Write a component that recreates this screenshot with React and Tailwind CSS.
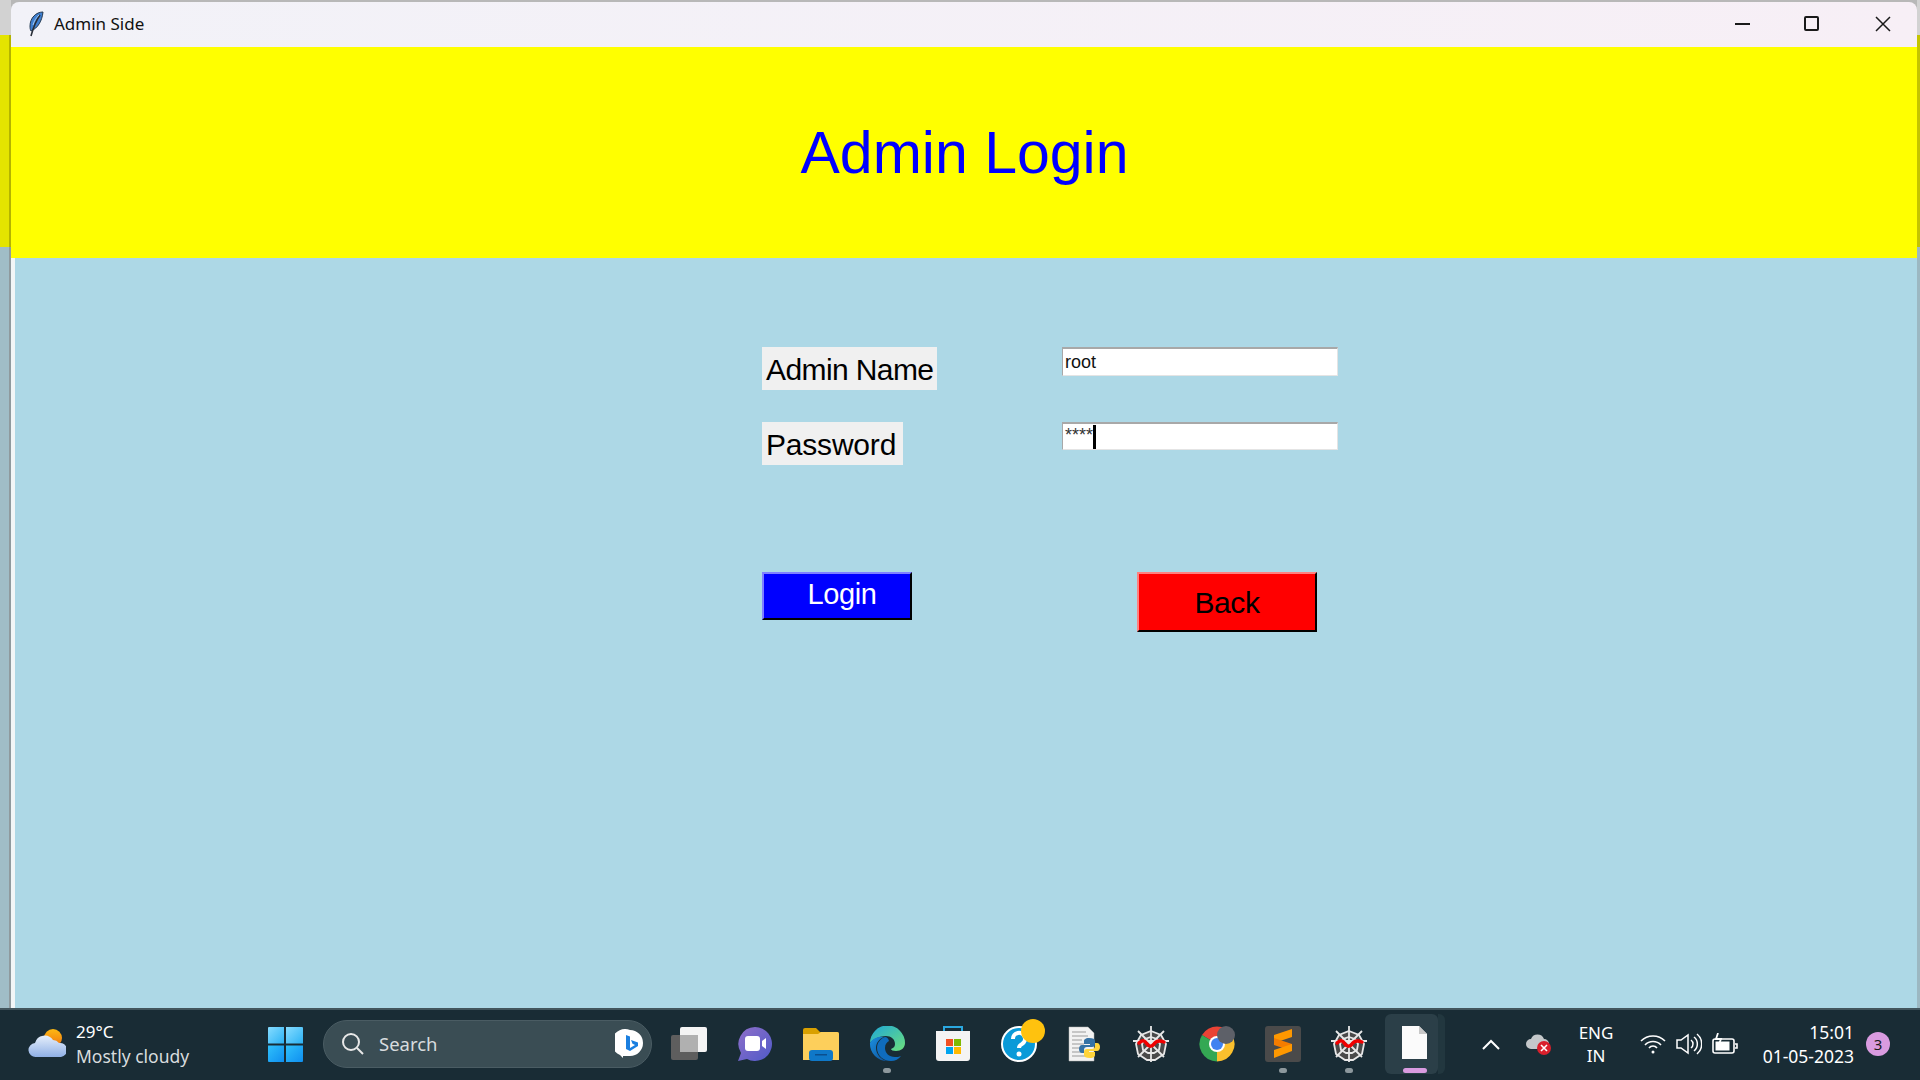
import React from 'react';

const Feather = () => (
  <svg width="16" height="26" viewBox="0 0 16 26">
    <path d="M15 1C8 1 2 7 2 15c0 2 0 3 1 5 7-3 11-10 12-19z" fill="#3f7fd0" stroke="#24384f" strokeWidth="1" />
    <path d="M12 4C9 8 6 14 3 25" stroke="#2a2f38" strokeWidth="1.6" fill="none" />
    <path d="M11 4C8 7 6 10 5 14" stroke="#9cc6f2" strokeWidth="1" fill="none" />
  </svg>
);

const Weather = () => (
  <svg width="38" height="34" viewBox="0 0 38 34">
    <defs>
      <linearGradient id="sun" x1="0" y1="0" x2="0" y2="1"><stop offset="0" stopColor="#fdb913" /><stop offset="1" stopColor="#f0720f" /></linearGradient>
      <linearGradient id="cl" x1="0" y1="0" x2="0" y2="1"><stop offset="0" stopColor="#e6effb" /><stop offset="1" stopColor="#8fb0e6" /></linearGradient>
    </defs>
    <circle cx="25" cy="11" r="9" fill="url(#sun)" />
    <path d="M8 30a7 7 0 0 1-1-14 10 10 0 0 1 18-3 8 8 0 0 1 6 3 7 7 0 0 1 2 14z" fill="url(#cl)" />
  </svg>
);

const WinLogo = () => (
  <svg width="35" height="35" viewBox="0 0 35 35">
    <defs>
      <linearGradient id="w1" x1="0" y1="0" x2="1" y2="1"><stop offset="0" stopColor="#86dcff" /><stop offset="1" stopColor="#2cb2f5" /></linearGradient>
      <linearGradient id="w2" x1="0" y1="0" x2="1" y2="1"><stop offset="0" stopColor="#2fc0fb" /><stop offset="1" stopColor="#0f8ff0" /></linearGradient>
    </defs>
    <path d="M1 0h15v16.500H0V1a1 1 0 0 1 1-1z" fill="url(#w1)" />
    <path d="M18 0h16a1 1 0 0 1 1 1v15.500H18z" fill="url(#w1)" />
    <path d="M0 18.500h16V35H1a1 1 0 0 1-1-1z" fill="url(#w2)" />
    <path d="M18 18.500h17V34a1 1 0 0 1-1 1H18z" fill="url(#w2)" />
  </svg>
);

const Bing = () => (
  <svg width="30" height="30" viewBox="0 0 30 30">
    <path d="M15 1a13 13 0 0 1 0 26H8v2l-3-3A13 13 0 0 1 15 1z" fill="#fff" />
    <path d="M11 6l4 1.500v11.500l5-3-2.500-1.200-1.500-3.800 7 2.500v3.500l-8 5-4-2z" fill="#1a7fe0" />
  </svg>
);

const TaskView = () => (
  <svg width="38" height="36" viewBox="0 0 38 36">
    <rect x="1" y="9" width="27" height="25" rx="2" fill="#5e5e5e" />
    <rect x="10" y="1" width="27" height="25" rx="2" fill="#f4f4f4" />
    <rect x="10" y="9" width="18" height="17" fill="#b0b0b0" />
  </svg>
);

const Meet = () => (
  <svg width="36" height="36" viewBox="0 0 36 36">
    <defs><linearGradient id="m" x1="0" y1="0" x2="1" y2="1"><stop offset="0" stopColor="#8f6fc9" /><stop offset="1" stopColor="#4f5ac9" /></linearGradient></defs>
    <path d="M18 1a17 17 0 1 1-8 32l-9 2 3-8A17 17 0 0 1 18 1z" fill="url(#m)" />
    <rect x="8" y="10" width="15" height="15" rx="3" fill="#fff" />
    <path d="M25 15l4-3v11l-4-3z" fill="#fff" />
  </svg>
);

const Folder = () => (
  <svg width="36" height="33" viewBox="0 0 36 33">
    <path d="M0 2a2 2 0 0 1 2-2h11l4 4h17a2 2 0 0 1 2 2v4H0z" fill="#d9a000" />
    <path d="M0 6h15l3-2h16a2 2 0 0 1 2 2v26H0z" fill="#fdcf5b" />
    <rect x="6" y="22" width="24" height="11" rx="3" fill="#0f78c8" />
    <rect x="12" y="26" width="12" height="1.500" fill="#0b4f8e" />
  </svg>
);

const Edge = () => (
  <svg width="36" height="36" viewBox="0 0 36 36">
    <defs>
      <linearGradient id="e1" x1="0" y1="0" x2="1" y2="1"><stop offset="0" stopColor="#1ea7d8" /><stop offset="1" stopColor="#6de07c" /></linearGradient>
      <linearGradient id="e2" x1="0" y1="0" x2="1" y2="1"><stop offset="0" stopColor="#1b8fe0" /><stop offset="1" stopColor="#0c4f97" /></linearGradient>
    </defs>
    <path d="M1 17A17.500 17.500 0 0 1 36 17c0 5-4 8-9 8-3 0-5-1-5-2 3-1 4-3 4-5 0-5-4-8-9-8-8 0-14 4-16 7z" fill="url(#e1)" />
    <path d="M1 17c2-4 8-7 14-6-5 2-8 6-8 11 0 6 5 12 12 13a17 17 0 0 1-18-18z" fill="url(#e2)" />
    <path d="M16 11c-5 2-8 6-8 11 0 7 6 13 14 13 4 0 8-2 10-5-2 1-4 1-6 1-6 0-10-4-10-9 0-4 2-6 4-7-1-3-2-4-4-4z" fill="#0f6cbd" />
  </svg>
);

const Store = () => (
  <svg width="36" height="36" viewBox="0 0 36 36">
    <path d="M9 6V1h18v5" fill="none" stroke="#2aa8e0" strokeWidth="2" />
    <path d="M1 5h34v27a3 3 0 0 1-3 3H4a3 3 0 0 1-3-3z" fill="#f4f4f4" />
    <rect x="11" y="13" width="7" height="7" fill="#f25022" />
    <rect x="19" y="13" width="7" height="7" fill="#7fba00" />
    <rect x="11" y="21" width="7" height="7" fill="#00a4ef" />
    <rect x="19" y="21" width="7" height="7" fill="#ffb900" />
  </svg>
);

const Help = () => (
  <div className="relative w-[36px] h-[36px]">
    <svg width="36" height="36" viewBox="0 0 36 36">
      <circle cx="18" cy="18" r="17" fill="#0a9ad8" stroke="#fff" strokeWidth="2" />
      <path d="M12 13a6 6 0 1 1 9 5c-2 1-3 2-3 4" fill="none" stroke="#fff" strokeWidth="4" />
      <circle cx="18" cy="28" r="2.500" fill="#fff" />
    </svg>
    <div className="absolute left-[20px] top-[-7px] w-[24px] h-[24px] rounded-full bg-[#ffc20e]" />
  </div>
);

const PyDoc = () => (
  <svg width="34" height="36" viewBox="0 0 34 36">
    <path d="M1 1h19l6 6v28H1z" fill="#f2f2f2" stroke="#b0b0b0" strokeWidth="0.500" />
    <path d="M4 6h14M4 10h16M4 14h10M4 18h12M4 22h8M4 26h10M4 30h14" stroke="#9a9a9a" strokeWidth="1" />
    <path d="M21 12c-4 0-5 2-5 3v3h6v1h-8c-2 0-3 2-3 4s1 4 3 4h2v-3c0-2 1-3 3-3h5c2 0 3-1 3-3v-3c0-2-2-3-6-3z" fill="#3572a5" />
    <path d="M22 32c4 0 5-2 5-3v-3h-6v-1h8c2 0 3-2 3-4s-1-4-3-4h-2v3c0 2-1 3-3 3h-5c-2 0-3 1-3 3v3c0 2 2 3 6 3z" fill="#ffd43b" />
  </svg>
);

const Spider = () => (
  <svg width="36" height="36" viewBox="0 0 36 36">
    <path d="M18 5l10 4 5 9-2 10-9 6H14l-9-6-2-10 5-9z" fill="#4a4a4a" />
    <g stroke="#e8e8e8" strokeWidth="1.800" fill="none">
      <path d="M18 0v36M5 5l26 26M31 5L5 31M0 15l36 0" />
      <path d="M18 5l10 4 5 9-2 10-9 6H14l-9-6-2-10 5-9z" />
      <path d="M18 11l6 2 3 5-1 6-5 3h-6l-5-3-1-6 3-5z" />
    </g>
    <path d="M6 17c4-4 6-2 8 1s5 3 7 0 5-4 10-2" fill="none" stroke="#f00000" strokeWidth="3.500" strokeLinecap="round" />
  </svg>
);

const Chrome = () => (
  <div className="relative w-[36px] h-[36px]">
    <svg width="36" height="36" viewBox="0 0 36 36">
      <path d="M18 18L3 9A17.500 17.500 0 0 1 33 9z" fill="#ea4335" />
      <path d="M18 18L33 9A17.500 17.500 0 0 1 18 35.500z" fill="#fbc02d" />
      <path d="M18 18L18 35.500A17.500 17.500 0 0 1 3 9z" fill="#34a853" />
      <circle cx="18" cy="18" r="8" fill="#fff" />
      <circle cx="18" cy="18" r="6" fill="#3f83f1" />
    </svg>
    <div className="absolute left-[18px] top-0 w-[18px] h-[18px] rounded-full bg-[#5d6068]" />
  </div>
);

const Sublime = () => (
  <div className="w-[36px] h-[36px] rounded-[3px] bg-[#4a4a4a] flex items-center justify-center">
    <svg width="18" height="30" viewBox="0 0 18 30">
      <path d="M18 0v8L0 14V6z" fill="#ff9800" />
      <path d="M0 9l18 6v7L0 16z" fill="#f57c00" />
      <path d="M18 15v7L0 29v-8z" fill="#ff9800" />
    </svg>
  </div>
);

const FileIcon = () => (
  <svg width="26" height="34" viewBox="0 0 26 34">
    <path d="M0 0h17l8 8v25H0z" fill="#fbfbfb" />
    <path d="M17 0v8h8z" fill="#c8c8c8" />
  </svg>
);

const Slot = ({ children, dot }) => (
  <div className="relative w-[66px] h-[70px] flex items-center justify-center shrink-0">
    {children}
    {dot && <div className="absolute left-[29px] bottom-[6px] w-[8px] h-[5px] rounded-full bg-[#8d989d]" />}
  </div>
);

export default function App() {
  return (
    <div className="w-[1920px] h-[1080px] flex flex-col overflow-hidden bg-[#b8b8b8]" style={{ fontFamily: '"Noto Sans", sans-serif' }}>
      <div className="flex flex-1 min-h-0">
        <div className="w-[11px] flex flex-col shrink-0">
          <div className="h-[35px] bg-[#d2d2d2]" />
          <div className="h-[212px] bg-[#e4e400] border-r-2 border-[#b4b400]" />
          <div className="flex-1 bg-[#a0bdc7] border-r-2 border-[#8f9a9e]" />
        </div>
        <div className="flex-1 flex flex-col mt-[2px] rounded-tl-[8px] rounded-tr-[8px] overflow-hidden">
          <div className="h-[45px] shrink-0 flex items-center pb-[2px] bg-gradient-to-r from-[#f2f2f8] to-[#f7eff6]">
            <div className="ml-[17px] w-[16px] flex"><Feather /></div>
            <div className="ml-[10px] text-[17px] text-[#111]">Admin Side</div>
            <div className="ml-auto flex items-center">
              <div className="w-[70px] flex justify-center"><div className="w-[15px] h-[2px] bg-[#1a1a1a]" /></div>
              <div className="w-[68px] mr-[4px] flex justify-center"><div className="w-[15px] h-[15px] rounded-[2px] border-2 border-[#1a1a1a]" /></div>
              <div className="w-[68px] flex justify-center">
                <svg width="16" height="16" viewBox="0 0 16 16"><path d="M1 1l14 14M15 1L1 15" stroke="#1a1a1a" strokeWidth="1.500" /></svg>
              </div>
            </div>
          </div>
          <div className="h-[211px] shrink-0 bg-[#ffff00] flex items-center justify-center pl-[1px] pt-[1px]">
            <div className="text-[59px] text-[#0000ff] leading-none" style={{ fontFamily: '"Liberation Sans", sans-serif' }}>Admin Login</div>
          </div>
          <div className="flex-1 bg-[#add8e6] border-l-[4px] border-[#f2f6f7] pl-[747px] pt-[89px]" style={{ fontFamily: '"Liberation Sans", sans-serif' }}>
            <div className="flex items-start h-[43px]">
              <div className="w-[300px] shrink-0">
                <div className="w-[175px] h-[43px] bg-[#f0f0f0] flex items-center pl-[4px] pt-[2px] text-[30px] tracking-[-0.6px] text-black">Admin Name</div>
              </div>
              <div className="w-[276px] h-[29px] bg-white border-t-2 border-l border-t-[#a8a8a8] border-l-[#a8a8a8] border-b border-r border-b-[#e4e4e4] border-r-[#e4e4e4] pl-[2px] flex items-center text-[18px] text-[#111]">root</div>
            </div>
            <div className="flex items-start h-[43px] mt-[32px]">
              <div className="w-[300px] shrink-0">
                <div className="w-[141px] h-[43px] bg-[#f0f0f0] flex items-center pl-[4px] pt-[2px] text-[30px] tracking-[-0.2px] text-black">Password</div>
              </div>
              <div className="w-[276px] h-[28px] bg-white border-t-2 border-l border-t-[#a8a8a8] border-l-[#a8a8a8] border-b border-r border-b-[#e4e4e4] border-r-[#e4e4e4] pl-[2px] flex items-center text-[18px] text-[#333]">
                <span className="-mt-[2px]">****</span>
                <span className="w-[3px] h-[24px] bg-black" />
              </div>
            </div>
            <div className="flex items-start mt-[107px]">
              <div className="w-[150px] h-[48px] bg-[#0000ff] border-2 border-t-[#8080ff] border-l-[#8080ff] border-b-black border-r-black flex items-center justify-center pl-[10px] pb-[2px] text-[29px] tracking-[-0.4px] text-white">Login</div>
              <div className="ml-[225px] w-[180px] h-[60px] bg-[#ff0000] border-2 border-t-[#ff8080] border-l-[#ff8080] border-b-black border-r-black flex items-center justify-center text-[30px] tracking-[-0.4px] text-black">Back</div>
            </div>
          </div>
        </div>
        <div className="w-[3px] flex flex-col shrink-0">
          <div className="h-[35px] bg-[#d2d2d2]" />
          <div className="h-[212px] bg-[#c4c400]" />
          <div className="flex-1 bg-[#9cb8c2]" />
        </div>
      </div>

      <div className="h-[72px] shrink-0 bg-[#192c35] border-t-2 border-[#42555d] flex items-center pb-[2px] text-white">
        <div className="ml-[28px] w-[38px] flex shrink-0"><Weather /></div>
        <div className="ml-[10px] w-[130px] shrink-0 leading-[24px]">
          <div className="text-[17px]">29°C</div>
          <div className="text-[17.5px] text-[#d8dcde]">Mostly cloudy</div>
        </div>
        <div className="ml-[62px] w-[35px] flex shrink-0"><WinLogo /></div>
        <div className="ml-[20px] w-[329px] h-[48px] rounded-full bg-[#3a4d54] border border-[#4a5c63] flex items-center shrink-0">
          <svg className="ml-[17px]" width="24" height="24" viewBox="0 0 24 24" fill="none" stroke="#e8e8e8" strokeWidth="2"><circle cx="10" cy="10" r="8" /><path d="M16 16l6 6" /></svg>
          <span className="ml-[14px] text-[18.5px] text-[#d8dcde]">Search</span>
          <div className="ml-auto mr-[6px] flex"><Bing /></div>
        </div>
        <div className="ml-[4px] flex">
          <Slot><TaskView /></Slot>
          <Slot><Meet /></Slot>
          <Slot><Folder /></Slot>
          <Slot dot><Edge /></Slot>
          <Slot><Store /></Slot>
          <Slot><Help /></Slot>
          <Slot><PyDoc /></Slot>
          <Slot><Spider /></Slot>
          <Slot><Chrome /></Slot>
          <Slot dot><Sublime /></Slot>
          <Slot dot><Spider /></Slot>
          <div className="relative w-[66px] h-[70px] flex items-center justify-center shrink-0">
            <div className="absolute left-[56px] top-[5px] w-[7px] h-[60px] rounded-r-[6px] bg-[#22373f]" />
            <div className="absolute left-[3px] top-[5px] w-[53px] h-[60px] rounded-[6px] bg-[#2b3f48]" />
            <div className="relative -mt-[2px] flex"><FileIcon /></div>
            <div className="absolute left-[21px] bottom-[6px] w-[24px] h-[5px] rounded-full bg-[#d99be0]" />
          </div>
        </div>
        <div className="ml-[34px] w-[22px] flex shrink-0">
          <svg width="18" height="11" viewBox="0 0 18 11" fill="none" stroke="#fff" strokeWidth="2"><path d="M1 10l8-8 8 8" /></svg>
        </div>
        <div className="relative ml-[22px] w-[26px] h-[22px] shrink-0">
          <svg width="26" height="22" viewBox="0 0 26 22"><path d="M5 16a5 5 0 0 1 0-10 7 7 0 0 1 13 0 5 5 0 0 1 0 10z" fill="#c4c8ca" /><circle cx="18" cy="15" r="7" fill="#d9202c" /><path d="M15 12l6 6M21 12l-6 6" stroke="#fff" strokeWidth="1.600" /></svg>
        </div>
        <div className="ml-[21px] w-[46px] text-center text-[17px] leading-[23px] shrink-0">
          <div>ENG</div>
          <div>IN</div>
        </div>
        <div className="ml-[21px] w-[26px] flex shrink-0">
          <svg width="26" height="20" viewBox="0 0 26 20" fill="none" stroke="#fff" strokeWidth="1.600"><path d="M1 7a17 17 0 0 1 24 0M5 11a11 11 0 0 1 16 0M9 14a5 5 0 0 1 8 0" /><circle cx="13" cy="18" r="1.500" fill="#fff" stroke="none" /></svg>
        </div>
        <div className="ml-[10px] w-[26px] flex shrink-0">
          <svg width="26" height="22" viewBox="0 0 26 22" fill="none" stroke="#fff" strokeWidth="1.500"><path d="M1 7h4l7-5v18l-7-5H1z" /><path d="M15 7a5 5 0 0 1 0 8M18 4a9 9 0 0 1 0 14M21 1a13 13 0 0 1 0 20" /></svg>
        </div>
        <div className="ml-[10px] w-[26px] flex shrink-0">
          <svg width="26" height="22" viewBox="0 0 26 22" fill="none" stroke="#fff" strokeWidth="1.600"><rect x="1" y="6" width="21" height="14" rx="2" /><rect x="3.500" y="8.500" width="14" height="9" fill="#fff" stroke="none" /><path d="M23 11h2v4h-2" /><path d="M6 0l-2 6h5l-2 5" strokeWidth="1.800" /></svg>
        </div>
        <div className="ml-[3px] w-[113px] text-right text-[17.5px] leading-[24px] shrink-0">
          <div>15:01</div>
          <div>01-05-2023</div>
        </div>
        <div className="ml-[12px] w-[24px] h-[24px] rounded-full bg-[#d99be0] text-[#1a1a1a] text-[15px] flex items-center justify-center shrink-0">3</div>
      </div>
    </div>
  );
}
